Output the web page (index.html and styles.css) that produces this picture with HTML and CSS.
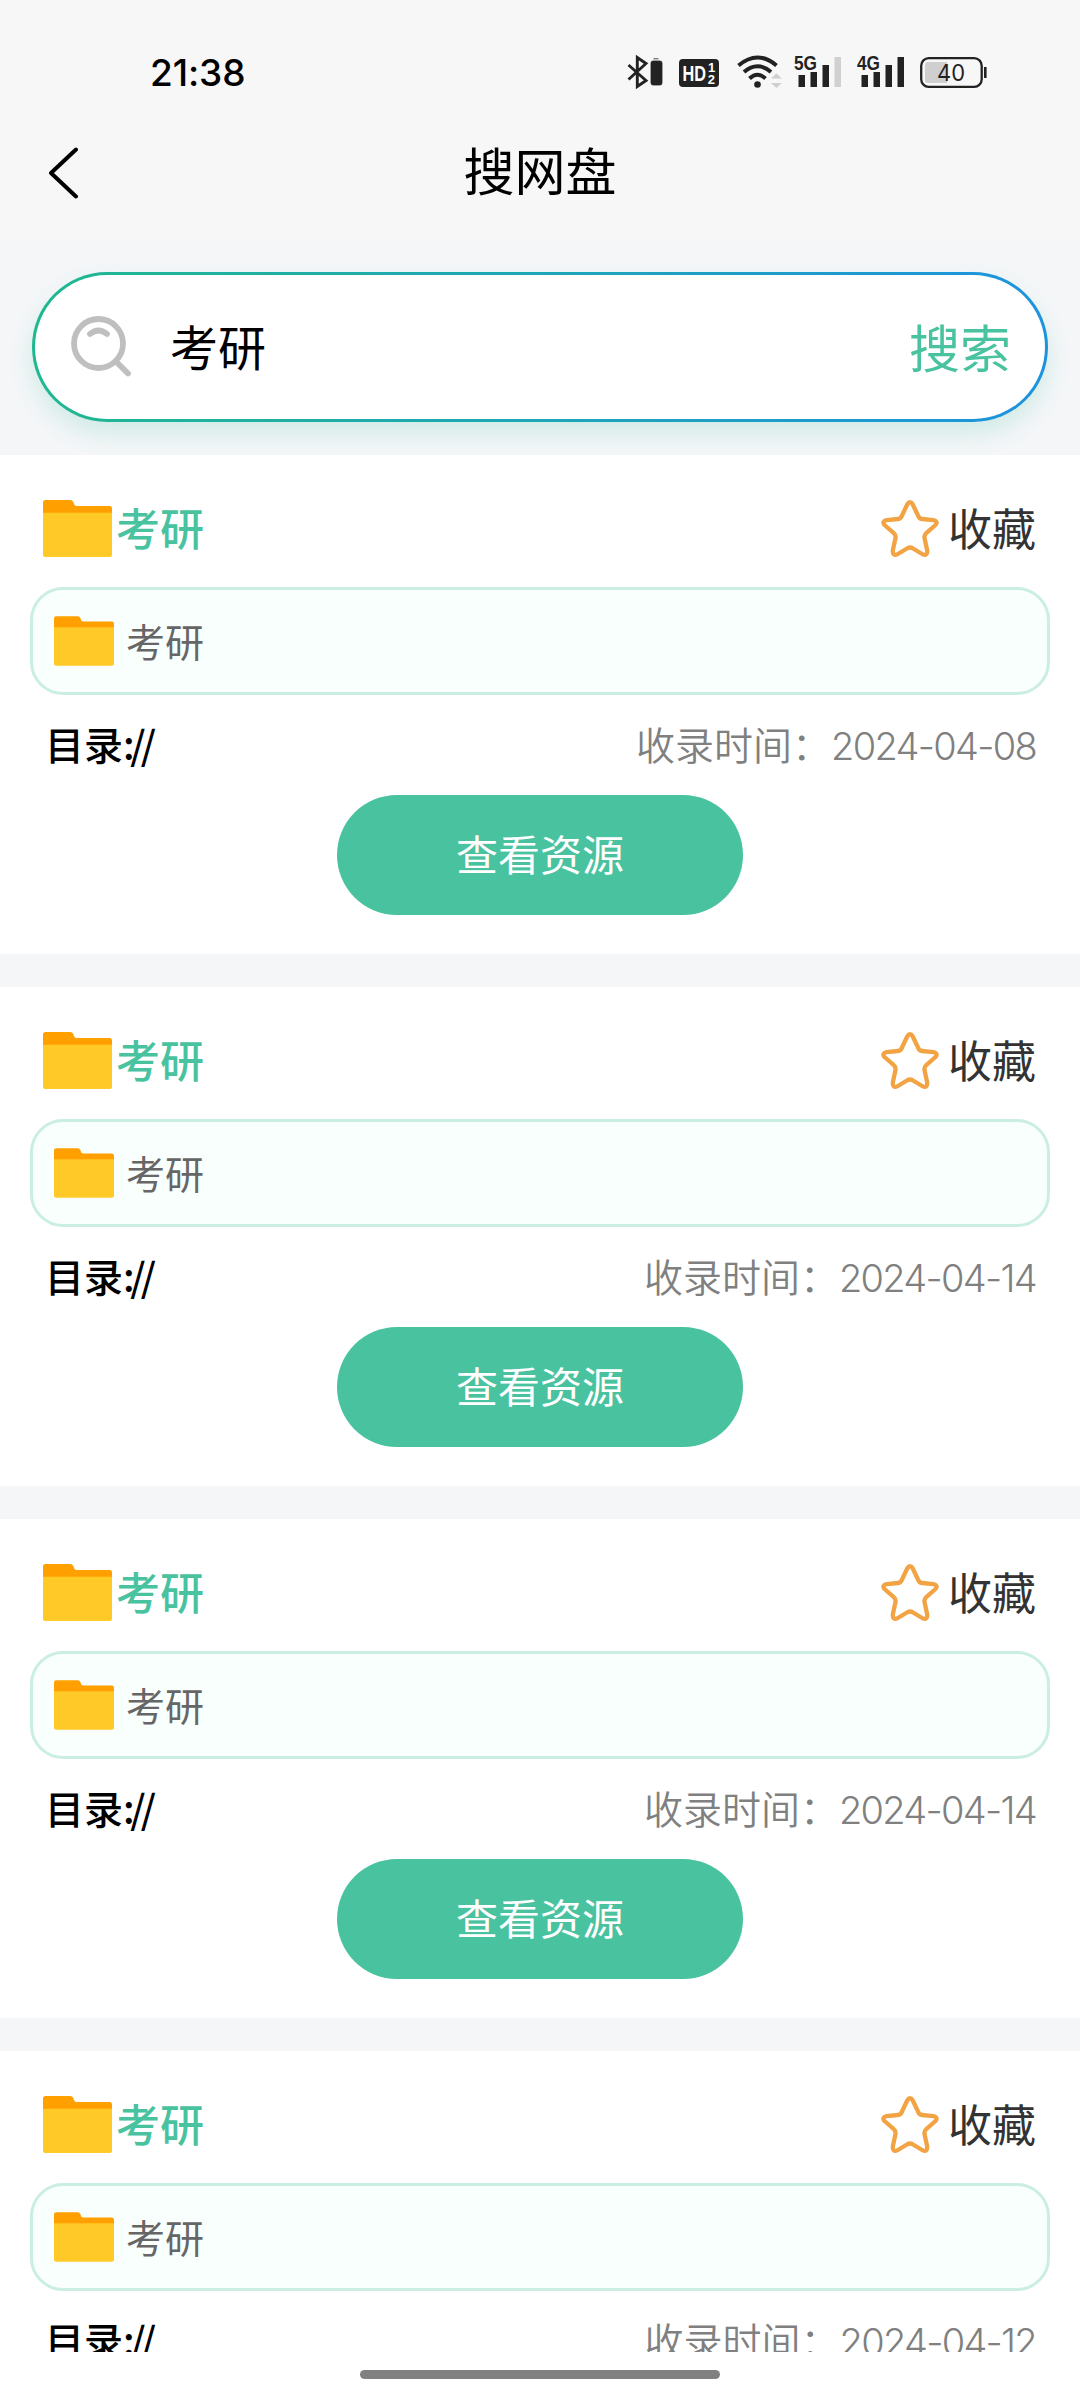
FILE: index.html
```html
<!DOCTYPE html>
<html lang="zh-CN">
<head>
<meta charset="utf-8">
<title>搜网盘</title>
<link rel="stylesheet" href="styles.css">
</head>
<body>
<svg class="defs" width="0" height="0" aria-hidden="true">
  <symbol id="folder" viewBox="0 0 69 57">
    <path d="M2.500 0H27Q29.500 0 30.300 2L31.200 4.500Q32 6 34 6H66.500Q69 6 69 8.500V20H0V2.500Q0 0 2.500 0Z" fill="#ff9f00"/>
    <path d="M0 12.700H69V54.500Q69 57 66.500 57H2.500Q0 57 0 54.500Z" fill="#ffc928"/>
  </symbol>
  <symbol id="star" viewBox="0 0 58 58">
    <path d="M26.200 4.500Q29 0 31.800 4.500L37 15.500Q38 18.700 41 19L52.500 20.200Q57.500 21.500 54.500 25L45.500 32.800Q43 35 43.500 38L46.200 50.500Q46.500 56 42 54.500L32 48.500Q29 46.500 26 48.500L16 54.500Q11.500 56 11.800 50.500L14.500 38Q15 35 12.500 32.800L3.500 25Q.5 21.500 5.500 20.200L17 19Q20 18.700 21 15.500Z" fill="none" stroke="#f2a444" stroke-width="4.300" stroke-linejoin="round"/>
  </symbol>
</svg>
<div class="screen">
  <header class="top">
    <div class="status">
      <span class="clock">21:38</span>
      <div class="indicators">
        <svg class="bt" width="36" height="36" viewBox="0 0 36 36">
          <path d="M1.500 11L19 26.500L10.300 32.500V3.500L19 9.500L1.500 25.500" fill="none" stroke="#222" stroke-width="2.900"/>
          <path d="M26.500 4.800H31.500M27.500 7H33Q35 7 35 9V29Q35 31 33 31H26Q24 31 24 29V9Q24 7 26 7Z" fill="#222" stroke="#222" stroke-width=".8"/>
        </svg>
        <svg class="hd" width="40" height="36" viewBox="0 0 40 36">
          <rect y="5" width="40" height="28" rx="4" fill="#222"/>
          <text x="3.500" y="27" font-size="22.500" textLength="23.500" lengthAdjust="spacingAndGlyphs" class="net">HD</text>
          <text x="29" y="18" font-size="13" class="net">1</text>
          <text x="28.700" y="30" font-size="13" class="net">2</text>
        </svg>
        <svg class="wifi" width="45" height="36" viewBox="0 0 45 36">
          <g fill="none" stroke="#222" stroke-width="4">
            <path d="M1.500 11.500Q20.500-4.500 39.500 11.500"/>
            <path d="M7 18Q20.500 6.500 34 18"/>
            <path d="M12.500 24.500Q20.500 17 28.500 24.500"/>
          </g>
          <circle cx="20.500" cy="30.500" r="3.300" fill="#222"/>
          <path d="M34 24.500L39.500 19.500L44.800 24.500ZM34 29L39.500 34L44.800 29Z" fill="#cfcfcf"/>
        </svg>
        <svg class="sig5" width="48" height="36" viewBox="0 0 48 36">
          <text x="0" y="16" font-size="21" textLength="23" lengthAdjust="spacingAndGlyphs" class="gen">5G</text>
          <path d="M4.500 21H11V33H4.500ZM16.500 18H23V33H16.500ZM28.500 11H35V33H28.500Z" fill="#222"/>
          <path d="M40.500 3H47V33H40.500Z" fill="#d0d0d0"/>
        </svg>
        <svg class="sig4" width="48" height="36" viewBox="0 0 48 36">
          <text x="0" y="16" font-size="21" textLength="23" lengthAdjust="spacingAndGlyphs" class="gen">4G</text>
          <path d="M4.500 21H11V33H4.500ZM16.500 18H23V33H16.500ZM28.500 11H35V33H28.500ZM40.500 3H47V33H40.500Z" fill="#222"/>
        </svg>
        <svg class="batt" width="69" height="36" viewBox="0 0 69 36">
          <path d="M9 8H28V29H9Q6 29 6 26V11Q6 8 9 8Z" fill="#cfcfcf"/>
          <rect x="2.200" y="4.200" width="60.500" height="28.600" rx="7.500" fill="none" stroke="#222" stroke-width="2.300"/>
          <path d="M66.300 13V24" stroke="#222" stroke-width="2.600"/>
          <text x="18" y="26.700" font-size="23" textLength="28" lengthAdjust="spacingAndGlyphs" class="pct">40</text>
        </svg>
      </div>
    </div>
    <div class="nav">
      <svg class="back" width="34" height="52" viewBox="0 0 34 52"><path d="M29 2.500L4 26L29 49.500" fill="none" stroke="#000" stroke-width="4" stroke-linecap="round" stroke-linejoin="round"/></svg>
      <h1 class="title">搜网盘</h1>
    </div>
  </header>
  <section class="search-area">
    <div class="search">
      <svg class="glass" width="62" height="62" viewBox="0 0 62 62"><g fill="none" stroke="#bfbfbf" stroke-width="5.800" stroke-linecap="round"><circle cx="28.500" cy="27.500" r="24.500"/><path d="M46.500 46L58 57.500"/><path d="M20 18Q28.500 11 37 18"/></g></svg>
      <span class="query">考研</span>
      <span class="go">搜索</span>
    </div>
  </section>
  <main class="results">
    <article class="card">
      <div class="head"><svg class="folder" width="69" height="57"><use href="#folder"/></svg><h2 class="name">考研</h2><svg class="star" width="58" height="58"><use href="#star"/></svg><span class="fav">收藏</span></div>
      <div class="file"><svg width="60" height="50"><use href="#folder"/></svg><span>考研</span></div>
      <div class="meta"><span class="dir">目录<i>://</i></span><span class="time">收录时间：<span class="date">2024-04-08</span></span></div>
      <div class="view">查看资源</div>
    </article>
    <article class="card">
      <div class="head"><svg class="folder" width="69" height="57"><use href="#folder"/></svg><h2 class="name">考研</h2><svg class="star" width="58" height="58"><use href="#star"/></svg><span class="fav">收藏</span></div>
      <div class="file"><svg width="60" height="50"><use href="#folder"/></svg><span>考研</span></div>
      <div class="meta"><span class="dir">目录<i>://</i></span><span class="time">收录时间：<span class="date">2024-04-14</span></span></div>
      <div class="view">查看资源</div>
    </article>
    <article class="card">
      <div class="head"><svg class="folder" width="69" height="57"><use href="#folder"/></svg><h2 class="name">考研</h2><svg class="star" width="58" height="58"><use href="#star"/></svg><span class="fav">收藏</span></div>
      <div class="file"><svg width="60" height="50"><use href="#folder"/></svg><span>考研</span></div>
      <div class="meta"><span class="dir">目录<i>://</i></span><span class="time">收录时间：<span class="date">2024-04-14</span></span></div>
      <div class="view">查看资源</div>
    </article>
    <article class="card">
      <div class="head"><svg class="folder" width="69" height="57"><use href="#folder"/></svg><h2 class="name">考研</h2><svg class="star" width="58" height="58"><use href="#star"/></svg><span class="fav">收藏</span></div>
      <div class="file"><svg width="60" height="50"><use href="#folder"/></svg><span>考研</span></div>
      <div class="meta"><span class="dir">目录<i>://</i></span><span class="time">收录时间：<span class="date">2024-04-12</span></span></div>
    </article>
  </main>
  <footer class="home"><div class="handle"></div></footer>
</div>
</body>
</html>
```
FILE: styles.css
```css
* { box-sizing: border-box; margin: 0; padding: 0; }
body { background: #fff; font-family: "Noto Sans CJK SC", sans-serif; color: #000; }
svg { display: block; flex: none; }
.defs { position: absolute; }
.screen { width: 1080px; height: 2400px; overflow: hidden; display: flex; flex-direction: column; }

.top { height: 240px; flex: none; background: #f7f7f7; }
.status { height: 104px; display: flex; align-items: flex-start; justify-content: space-between; padding: 0 92px 0 150px; }
.clock { font: 500 37px/44px Inter, sans-serif; letter-spacing: -.1px; margin-top: 51px; }
.indicators { display: flex; margin-top: 54px; }
.hd { margin-left: 16px; }
.wifi { margin-left: 18px; }
.sig5 { margin-left: 12px; }
.sig4 { margin-left: 15px; }
.batt { margin-left: 14px; }
.net { font-family: "Liberation Sans", sans-serif; font-weight: 700; fill: #fff; }
.gen { font-family: "Liberation Sans", sans-serif; font-weight: 700; fill: #222; }
.pct { font-family: Inter, sans-serif; fill: #222; }
.nav { height: 136px; display: grid; grid-template-columns: 1fr auto 1fr; align-items: start; }
.back { margin: 43px 0 0 47px; }
.title { font-weight: 400; font-size: 51px; line-height: 60px; margin-top: 35px; }

.search-area { height: 215px; flex: none; background: #f4f6f8; padding: 32px; }
.search { height: 150px; display: flex; align-items: center; border: 3px solid transparent; border-radius: 75px; padding: 0 34px 0 35px; background: linear-gradient(#fff, #fff) padding-box, linear-gradient(90deg, #1fb890, #1d93de) border-box; box-shadow: 0 12px 22px rgba(73, 194, 159, .2); }
.query { font-size: 48px; line-height: 60px; margin: 0 0 4px 38px; }
.go { font-size: 51px; line-height: 60px; margin: 0 0 3px auto; color: #49c29f; }

.results { height: 1897px; flex: none; overflow: hidden; display: flex; flex-direction: column; gap: 33px; background: #f4f6f8; }
.card { height: 499px; flex: none; background: #fff; padding: 0 30px; }
.head { height: 132px; display: flex; align-items: flex-start; padding: 45px 14px 0 13px; }
.name { font-size: 44px; font-weight: 500; line-height: 54px; color: #49c29f; margin-left: 4px; }
.star { margin-left: auto; }
.fav { font-size: 44px; line-height: 54px; color: #333; margin-left: 9px; }
.file { height: 108px; display: flex; align-items: center; gap: 12px; padding: 0 21px; border: 3px solid #cbeee2; border-radius: 33px; background: #f9fffd; color: #666; font-size: 39px; line-height: 50px; }
.file span { margin-bottom: 3px; }
.meta { height: 54px; display: flex; justify-content: space-between; margin-top: 21px; padding: 0 14px 0 15px; font-size: 39px; line-height: 54px; }
.dir { font-weight: 500; }
.dir i { font-style: normal; letter-spacing: -4.5px; }
.time { color: #808080; font-weight: 350; }
.date { font-family: Inter, sans-serif; font-weight: 350; font-size: 38px; letter-spacing: -1.7px; }
.view { width: 406px; height: 120px; margin: 25px auto 0; border-radius: 60px; background: #49c29f; color: #fff; font-size: 42px; line-height: 115px; text-align: center; }

.home { flex: 1; display: flex; justify-content: center; padding-top: 18px; background: #fff; }
.handle { width: 360px; height: 9px; border-radius: 5px; background: #808080; }
```
